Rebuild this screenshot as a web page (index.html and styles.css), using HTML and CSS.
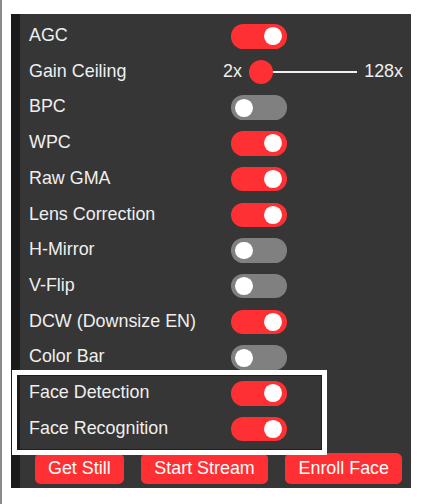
FILE: index.html
```html
<!DOCTYPE html>
<html>
<head>
<meta charset="utf-8">
<link rel="stylesheet" href="styles.css">
</head>
<body>
<div class="page">
  <div class="panel">
    <div class="strip"></div>
    <div class="content">
      <div class="rows">
        <div class="row"><label class="lbl">AGC</label><span class="switch on"></span></div>
        <div class="row"><label class="lbl">Gain Ceiling</label>
          <div class="range-group">
            <span class="range-min">2x</span>
            <div class="range"><span class="track"></span><span class="thumb"></span></div>
            <span class="range-max">128x</span>
          </div>
        </div>
        <div class="row"><label class="lbl">BPC</label><span class="switch"></span></div>
        <div class="row"><label class="lbl">WPC</label><span class="switch on"></span></div>
        <div class="row"><label class="lbl">Raw GMA</label><span class="switch on"></span></div>
        <div class="row"><label class="lbl">Lens Correction</label><span class="switch on"></span></div>
        <div class="row"><label class="lbl">H-Mirror</label><span class="switch"></span></div>
        <div class="row"><label class="lbl">V-Flip</label><span class="switch"></span></div>
        <div class="row"><label class="lbl">DCW (Downsize EN)</label><span class="switch on"></span></div>
        <div class="row"><label class="lbl">Color Bar</label><span class="switch"></span></div>
        <div class="row"><label class="lbl">Face Detection</label><span class="switch on"></span></div>
        <div class="row"><label class="lbl">Face Recognition</label><span class="switch on"></span></div>
      </div>
      <div class="buttons">
        <button class="btn">Get Still</button>
        <button class="btn">Start Stream</button>
        <button class="btn">Enroll Face</button>
      </div>
    </div>
  </div>
  <div class="highlight"></div>
</div>
</body>
</html>
```
FILE: styles.css
```css
html, body {
  margin: 0;
  padding: 0;
  background: #ffffff;
}

.page {
  position: relative;
  box-sizing: border-box;
  height: 504px;
  border-left: 2px solid #8a8a8a;
  padding: 14px 0 0 9px;
  font-family: "Liberation Sans", Arial, sans-serif;
  font-size: 17.9px;
  color: #efefef;
}

.panel {
  display: flex;
  width: 400px;
  height: 474px;
  background: #363636;
}

.strip {
  flex: none;
  width: 9px;
  background: #1b1b1b;
}

.content {
  flex: 1;
  display: flex;
  flex-direction: column;
  padding: 10px 3px 0 9px;
}

.rows {
  display: flex;
  flex-direction: column;
  gap: 11.15px;
}

.row {
  display: flex;
  align-items: center;
  height: 24.57px;
  line-height: 24.57px;
}

.lbl {
  flex: none;
  width: 189px;
  position: relative;
  top: -1px;
}

.switch {
  position: relative;
  flex: none;
  width: 55.85px;
  height: 24.57px;
  border-radius: 12.3px;
  margin-left: 13px;
  background: #808080;
}

.switch::before {
  content: "";
  position: absolute;
  left: 4.47px;
  top: 3.35px;
  width: 17.9px;
  height: 17.9px;
  border-radius: 50%;
  background: #ffffff;
}

.switch.on {
  background: #ff3034;
}

.switch.on::before {
  transform: translateX(29px);
}

.range-group {
  flex: 1;
  display: flex;
  align-items: center;
}

.range-min {
  padding: 0 6px 0 5px;
  position: relative;
  top: -1px;
}

.range-max {
  padding: 0 5px 0 7px;
  position: relative;
  top: -1px;
}

.range {
  position: relative;
  flex: 1;
  height: 24px;
  margin-left: 1px;
}

.track {
  position: absolute;
  left: 0;
  right: 0;
  top: 11.5px;
  height: 2px;
  background: #efefef;
}

.thumb {
  position: absolute;
  left: 0;
  top: 0;
  width: 24px;
  height: 24px;
  border-radius: 50%;
  background: #ff3034;
}

.buttons {
  display: flex;
  justify-content: space-between;
  margin-top: 5.9px;
}

.btn {
  display: block;
  margin: 5.6px;
  padding: 0 13.4px;
  border: 0;
  border-radius: 5.6px;
  background: #ff3034;
  color: #ffffff;
  font-family: "Liberation Sans", Arial, sans-serif;
  font-size: 17.9px;
  line-height: 31px;
}

.highlight {
  position: absolute;
  left: 10px;
  top: 370px;
  width: 305px;
  height: 75px;
  border: 5px solid #ffffff;
  box-shadow: inset 0 0 0 1px #1e1e1e;
}
```
